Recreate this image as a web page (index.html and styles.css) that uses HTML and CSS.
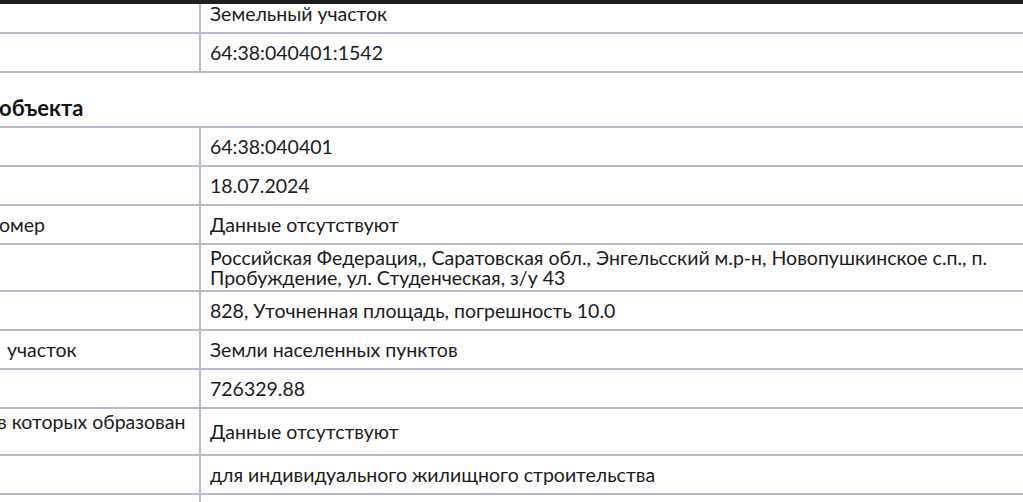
FILE: index.html
```html
<!DOCTYPE html>
<html lang="ru">
<head>
<meta charset="utf-8">
<title>Сведения об объекте</title>
<link rel="stylesheet" href="styles.css">
</head>
<body>
<div class="topbar"></div>
<main class="sheet">
  <table class="props props-first">
    <tbody>
      <tr><td class="label"></td><td class="value">Земельный участок</td></tr>
      <tr><td class="label"></td><td class="value">64:38:040401:1542</td></tr>
    </tbody>
  </table>

  <h2 class="section-title">объекта</h2>

  <table class="props">
    <tbody>
      <tr><td class="label"></td><td class="value">64:38:040401</td></tr>
      <tr><td class="label"></td><td class="value">18.07.2024</td></tr>
      <tr><td class="label"><span class="cut cut-0">омер</span></td><td class="value">Данные отсутствуют</td></tr>
      <tr><td class="label"></td><td class="value">Российская Федерация,, Саратовская обл., Энгельсский м.р-н, Новопушкинское с.п., п. Пробуждение, ул. Студенческая, з/у 43</td></tr>
      <tr><td class="label"></td><td class="value">828, Уточненная площадь, погрешность 10.0</td></tr>
      <tr><td class="label"><span class="cut cut-7">участок</span></td><td class="value">Земли населенных пунктов</td></tr>
      <tr><td class="label"></td><td class="value">726329.88</td></tr>
      <tr><td class="label"><span class="cut cut-neg">в которых образован</span><span class="cut">&nbsp;</span></td><td class="value">Данные отсутствуют</td></tr>
      <tr><td class="label"></td><td class="value">для индивидуального жилищного строительства</td></tr>
      <tr><td class="label"></td><td class="value">&nbsp;</td></tr>
    </tbody>
  </table>
</main>
</body>
</html>
```

FILE: styles.css
```css
html, body {
  margin: 0;
  padding: 0;
  background: #ffffff;
  overflow: hidden;
}

body {
  font-family: Lato, "Noto Sans", sans-serif;
  font-size: 19.5px;
  color: #1b1b1b;
}

.topbar {
  position: fixed;
  top: 0;
  left: 0;
  right: 0;
  height: 4px;
  background: #1e1e1e;
  z-index: 2;
}

.sheet {
  margin-top: -5px;
}

.props {
  border-collapse: separate;
  border-spacing: 0;
  table-layout: fixed;
  width: 1049px;
}

.props tr {
  height: 39px;
}

.props td {
  padding: 3px 9px 2px;
  line-height: 20px;
  vertical-align: middle;
  border-bottom: 2px solid #b7bacb;
}

.props td.label {
  width: 190px;
  padding-left: 0;
  border-right: 2px solid #b7bacb;
  white-space: nowrap;
  overflow: hidden;
}

.props td.value {
  width: 830px;
}

.cut {
  display: block;
}

.cut-0 {
  margin-left: -1px;
}

.cut-7 {
  margin-left: 7px;
}

.cut-neg {
  margin-left: -3px;
}

.section-title + .props {
  border-top: 2px solid #b7bacb;
}

.section-title {
  margin: 0 0 0 -1px;
  padding: 22px 0 5px;
  height: 26px;
  font-size: 22px;
  line-height: 26px;
  font-weight: 700;
  color: #141414;
}
```
